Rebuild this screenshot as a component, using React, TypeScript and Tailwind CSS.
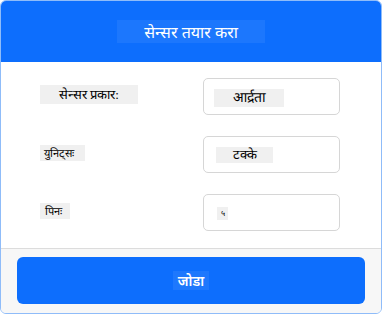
import React from "react";

const Row = ({
  label,
  labelCls,
  value,
  valueCls,
  mt,
}: {
  label: string;
  labelCls: string;
  value: string;
  valueCls: string;
  mt?: string;
}) => (
  <div className={`flex items-start ${mt ?? ""}`}>
    <div className="w-[163px] pt-[4px]">
      <span className={`inline-block bg-[#f0f0f0] text-black ${labelCls}`}>{label}</span>
    </div>
    <div className="w-[137px] h-[37px] rounded-[5px] border border-[#d6d6d6] bg-white">
      <span className={`inline-block bg-[#f0f0f0] text-black ${valueCls}`}>{value}</span>
    </div>
  </div>
);

export default function App() {
  return (
    <div className="w-[382px] h-[314px] rounded-[6px] border border-[#8fbcf9] overflow-hidden flex flex-col bg-white font-['Liberation_Serif',serif]">
      <div className="h-[61px] bg-[#0d6efd] flex items-start justify-center pt-[19px]">
        <div className="w-[148px] h-[23px] bg-[#ffffff10] flex items-center justify-center text-white text-[16px] leading-none font-['Noto_Sans','Liberation_Sans',sans-serif]">
          सेन्सर तयार करा
        </div>
      </div>
      <div className="pl-[39px] pt-[16px] h-[186px]">
        <Row
          label="सेन्सर प्रकार:"
          labelCls="w-[98px] h-[19px] text-center text-[13px] leading-[19px]"
          value="आर्द्रता"
          valueCls="ml-[10px] mt-[10px] w-[70px] h-[18px] text-center text-[14px] leading-[18px]"
        />
        <Row
          mt="mt-[21px]"
          label="युनिट्सः"
          labelCls="w-[45px] h-[16px] pl-[4px] text-[11px] leading-[16px]"
          value="टक्के"
          valueCls="ml-[12px] mt-[10px] w-[57px] h-[16px] text-center text-[13px] leading-[16px]"
        />
        <Row
          mt="mt-[21px]"
          label="पिनः"
          labelCls="w-[30px] h-[16px] pl-[5px] text-[11px] leading-[16px]"
          value="५"
          valueCls="ml-[13px] mt-[12px] w-[11px] h-[13px] text-center text-[8px] leading-[13px]"
        />
      </div>
      <div className="flex-1 bg-[#f7f7f7] border-t border-[#dcdcdc] px-[16px] pt-[8px]">
        <div className="h-[47px] rounded-[6px] bg-[#0d6efd] flex items-center justify-center">
          <span className="inline-block px-[5px] h-[19px] leading-[19px] bg-[#ffffff12] text-white text-[14px] font-semibold font-['Noto_Sans','Liberation_Sans',sans-serif]">
            जोडा
          </span>
        </div>
      </div>
    </div>
  );
}
